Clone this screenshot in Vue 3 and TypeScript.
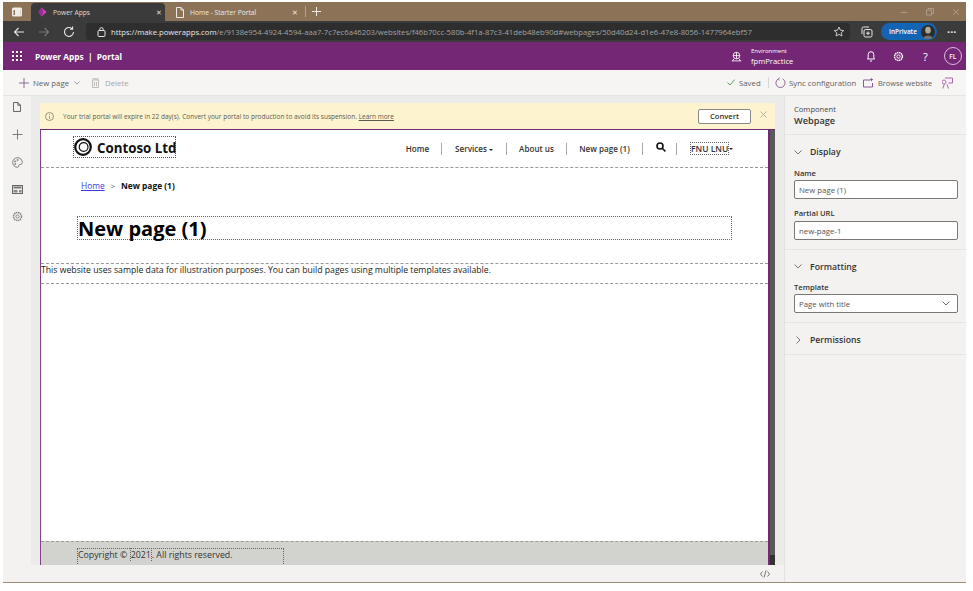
<script setup lang="ts">
const navItems = [
  { label: 'Home', caret: false, width: 47 },
  { label: 'Services', caret: true, width: 64 },
  { label: 'About us', caret: false, width: 59 },
  { label: 'New page (1)', caret: false, width: 75 },
]
</script>

<template>
  <div class="page">
    <div class="window">
      <!-- browser tabs -->
      <div class="titlebar">
        <svg class="tabs-btn" width="12" height="12" viewBox="0 0 12 12"><rect x="1" y="1.5" width="10" height="9" rx="1.5" fill="#f0ede8" /><rect x="2.5" y="4" width="7" height="5" fill="#8c7358" /><rect x="4" y="4" width="5.5" height="5" fill="#f0ede8" /></svg>
        <div class="tab active">
          <svg width="9" height="10" viewBox="0 0 9 10"><path d="M3.5 .5 L8.5 5 L3.5 9.5 L.5 5 Z" fill="#d04ac4" /><path d="M3.5 .5 L5.5 5 L3.5 9.5 L.5 5 Z" fill="#9a2a96" /></svg>
          <span class="tab-text">Power Apps</span>
          <span class="tab-x">✕</span>
        </div>
        <div class="tab second">
          <svg width="8" height="11" viewBox="0 0 8 11" fill="none" stroke="#efe9e2" stroke-width="1"><path d="M.5 .5 H5 L7.5 3 V10.5 H.5 Z M5 .5 V3 H7.5" /></svg>
          <span class="tab-text">Home - Starter Portal</span>
          <span class="tab-x">✕</span>
        </div>
        <span class="tab-sep"></span>
        <svg width="11" height="11" viewBox="0 0 11 11" stroke="#efe9e2" stroke-width="1"><path d="M5.5 1 V10 M1 5.5 H10" /></svg>
        <div class="win-controls">
          <svg width="8" height="10" viewBox="0 0 8 10" stroke="#ab9a85"><path d="M1 5.5 H7" /></svg>
          <svg width="8" height="10" viewBox="0 0 8 10" stroke="#ab9a85" fill="none"><rect x=".5" y="3" width="5" height="5" /><path d="M2 3 V1.5 H7.5 V6.5 H5.5" /></svg>
          <svg width="8" height="10" viewBox="0 0 8 10" stroke="#ab9a85"><path d="M1 2 L7 8 M7 2 L1 8" /></svg>
        </div>
      </div>

      <!-- address bar -->
      <div class="toolbar">
        <svg class="tb-back" width="12" height="12" viewBox="0 0 12 12" fill="none" stroke="#e6e6e6" stroke-width="1.1"><path d="M11 6 H1.5 M5.5 2 L1.5 6 L5.5 10" /></svg>
        <svg class="tb-fwd" width="12" height="12" viewBox="0 0 12 12" fill="none" stroke="#777" stroke-width="1.1"><path d="M1 6 H10.5 M6.5 2 L10.5 6 L6.5 10" /></svg>
        <svg class="tb-reload" width="12" height="12" viewBox="0 0 12 12" fill="none" stroke="#e6e6e6" stroke-width="1.1"><path d="M10.5 6 A4.5 4.5 0 1 1 9 2.6 M9.6 .6 V3.2 H7" /></svg>
        <div class="url">
          <svg width="9" height="10" viewBox="0 0 9 10" fill="none" stroke="#e6e6e6"><rect x="1" y="3.5" width="7" height="6" rx="1" /><path d="M2.8 3.5 V2.3 A1.7 1.7 0 0 1 6.2 2.3 V3.5" /></svg>
          <span class="url-text"><span class="url-main">https://make.powerapps.com</span>/e/9138e954-4924-4594-aaa7-7c7ec6a46203/websites/f46b70cc-580b-4f1a-87c3-41deb48eb90d#webpages/50d40d24-d1e6-47e8-8056-1477964ebf57</span>
          <svg class="url-star" width="12" height="12" viewBox="0 0 12 12" fill="none" stroke="#c8c8c8"><path d="M6 1 L7.4 4.2 L10.8 4.5 L8.2 6.8 L9 10 L6 8.4 L3 10 L3.8 6.8 L1.2 4.5 L4.6 4.2 Z" /></svg>
        </div>
        <svg class="tb-coll" width="12" height="12" viewBox="0 0 12 12" fill="none" stroke="#e6e6e6"><rect x="3" y="3.5" width="8" height="7.5" rx="1.5" /><path d="M1 8 V2.5 A1.5 1.5 0 0 1 2.5 1 H8 M7 5.5 V9 M5.2 7.2 H8.8" /></svg>
        <div class="inprivate">
          <span>InPrivate</span>
          <svg class="avatar" width="14" height="14" viewBox="0 0 14 14"><circle cx="7" cy="7" r="7" fill="#2c2c2c" /><ellipse cx="7" cy="5.2" rx="2.8" ry="3.4" fill="#b0a898" /><path d="M2.5 13 C3 9.5 11 9.5 11.5 13 A7 7 0 0 1 2.5 13 Z" fill="#77726a" /></svg>
        </div>
        <span class="tb-dots">···</span>
      </div>

      <!-- app header -->
      <header class="appbar">
        <svg class="waffle" width="10" height="10" viewBox="0 0 10 10" fill="#fff"><rect x="0" y="0" width="2" height="2" /><rect x="4" y="0" width="2" height="2" /><rect x="8" y="0" width="2" height="2" /><rect x="0" y="4" width="2" height="2" /><rect x="4" y="4" width="2" height="2" /><rect x="8" y="4" width="2" height="2" /><rect x="0" y="8" width="2" height="2" /><rect x="4" y="8" width="2" height="2" /><rect x="8" y="8" width="2" height="2" /></svg>
        <span class="app-title">Power Apps&nbsp; | &nbsp;Portal</span>
        <svg class="env-icon" width="11" height="11" viewBox="0 0 12 11" fill="none" stroke="#fff" stroke-width=".9"><circle cx="6" cy="4.5" r="3.6" /><path d="M6 1 V8 M2.5 4.5 H9.5 M.8 10.3 H11.2 M3 8 L2 10.3 M9 8 L10 10.3" /></svg>
        <div class="env">
          <span class="env-label">Environment</span>
          <span class="env-name">fpmPractice</span>
        </div>
        <svg class="ic-bell" width="8" height="11" viewBox="0 0 8 11" fill="none" stroke="#fff"><path d="M.5 8 H7.5 L6.8 6.5 V3.5 A2.8 2.8 0 0 0 1.2 3.5 V6.5 Z M3 10 H5" /></svg>
        <svg class="ic-gear" width="11" height="11" viewBox="0 0 12 12" fill="none" stroke="#fff"><circle cx="6" cy="6" r="1.8" /><circle cx="6" cy="6" r="4.3" stroke-width="1.6" stroke-dasharray="1.7 .55" /></svg>
        <span class="ic-help">?</span>
        <span class="user-circle">FL</span>
      </header>

      <!-- command bar -->
      <div class="cmdbar">
        <svg class="cmd-plus" width="10" height="10" viewBox="0 0 10 10" stroke="#8a6a96" stroke-width="1"><path d="M5 0 V10 M0 5 H10" /></svg>
        <span class="cmd-text new-page">New page</span>
        <svg class="cmd-chev" width="6" height="4" viewBox="0 0 6 4" fill="none" stroke="#a09e9c"><path d="M.3 .5 L3 3.2 L5.7 .5" /></svg>
        <svg class="cmd-trash" width="7" height="10" viewBox="0 0 7 10" fill="none" stroke="#bdbbb9"><path d="M.5 2 H6.5 V9.5 H.5 Z M0 1 H7 M2.5 .3 H4.5 M2.5 4 V8 M4.5 4 V8" /></svg>
        <span class="cmd-text muted">Delete</span>
        <svg class="cmd-check" width="8" height="7" viewBox="0 0 8 7" fill="none" stroke="#5a9e5a"><path d="M.4 3.5 L3 6 L7.6 .6" /></svg>
        <span class="cmd-text saved">Saved</span>
        <span class="cmd-sep"></span>
        <svg class="cmd-sync" width="11" height="12" viewBox="0 0 12 12" fill="none" stroke="#8b5a96" stroke-width="1"><path d="M3.5 1.6 A5 5 0 1 0 8.5 1.6 M5 .3 L3.4 1.6 L5 3" /></svg>
        <span class="cmd-text sync">Sync configuration</span>
        <svg class="cmd-browse" width="11" height="10" viewBox="0 0 11 10" fill="none" stroke="#8b5a96"><path d="M7 2 H.5 V9 H9.5 V5 M8.5 .2 V3 M7 1.6 H10" /></svg>
        <span class="cmd-text browse">Browse website</span>
        <svg class="cmd-person" width="11" height="12" viewBox="0 0 11 12" fill="none" stroke="#b061b0"><path d="M3 1 H10.5 V6 H6.5 M4 5 A2 2 0 1 0 4 5.1 M.7 11.5 L2.4 7.3 M6.5 11.5 L5 7.3" /></svg>
      </div>

      <div class="body">
        <!-- left rail -->
        <nav class="rail">
          <svg width="8" height="10" viewBox="0 0 9 11" fill="none" stroke="#3f3e3d" stroke-width=".9"><path d="M.5 .5 H5.5 L8.5 3.5 V10.5 H.5 Z M5.5 .5 V3.5 H8.5" /></svg>
          <svg width="11" height="11" viewBox="0 0 11 11" stroke="#6f6e6d" stroke-width=".9"><path d="M5.5 .5 V10.5 M.5 5.5 H10.5" /></svg>
          <svg width="11" height="11" viewBox="0 0 11 11" fill="none" stroke="#7d7c7b"><path d="M5.5 .7 A4.8 4.8 0 1 0 5.5 10.3 C7.2 10.3 6.4 8.6 7 7.9 C7.6 7.2 10.3 7.8 10.3 5.5 A4.8 4.8 0 0 0 5.5 .7 Z" /><circle cx="3.2" cy="4.4" r=".6" /><circle cx="5.6" cy="3" r=".6" /><circle cx="3.3" cy="7" r=".6" /></svg>
          <svg width="11" height="9" viewBox="0 0 11 9"><rect x=".5" y=".5" width="10" height="8" fill="none" stroke="#666" /><rect x="1.5" y="1.5" width="8" height="2" fill="#777" /><rect x="1.5" y="5" width="4" height="2.5" fill="#888" /><rect x="7" y="5" width="2.5" height="2.5" fill="#888" /></svg>
          <svg width="11" height="11" viewBox="0 0 11 11" fill="none" stroke="#8a8988"><circle cx="5.5" cy="5.5" r="1.6" /><circle cx="5.5" cy="5.5" r="4" stroke-width="1.5" stroke-dasharray="1.6 .5" /></svg>
        </nav>

        <main class="canvas">
          <div class="banner">
            <svg width="9" height="9" viewBox="0 0 9 9" fill="none" stroke="#77705a" stroke-width=".7"><circle cx="4.5" cy="4.5" r="4" /><path d="M4.5 4 V6.8 M4.5 2.2 V3.1" /></svg>
            <span class="banner-text">Your trial portal will expire in 22 day(s). Convert your portal to production to avoid its suspension. <u>Learn more</u></span>
            <button class="convert">Convert</button>
            <svg class="banner-x" width="7" height="7" viewBox="0 0 7 7" stroke="#a7a294" stroke-width=".8"><path d="M.5 .5 L6.5 6.5 M6.5 .5 L.5 6.5" /></svg>
          </div>

          <div class="preview">
            <div class="site">
              <div class="site-header">
                <div class="logo">
                  <svg class="logo-mark" width="18" height="18" viewBox="0 0 18 18" fill="none" stroke="#111"><circle cx="9" cy="9" r="7.8" stroke-width="2.2" /><circle cx="9.6" cy="9" r="4.4" stroke-width="1.2" /></svg>
                  <span class="logo-text">Contoso Ltd</span>
                </div>
                <div class="site-nav">
                  <template v-for="item in navItems" :key="item.label">
                    <span class="nav-item" :style="{ width: item.width + 'px' }">
                      {{ item.label }}<i v-if="item.caret" class="caret"></i>
                    </span>
                    <span class="nav-sep"></span>
                  </template>
                  <svg class="nav-search" width="10" height="10" viewBox="0 0 10 10" fill="none" stroke="#111" stroke-width="1.6"><circle cx="4" cy="4" r="3" /><path d="M6.2 6.2 L9.4 9.4" /></svg>
                  <span class="nav-sep"></span>
                  <span class="nav-user"><span class="dotted-name">FNU LNU</span><i class="caret"></i></span>
                </div>
              </div>

              <div class="crumbs">
                <a class="crumb-link">Home</a>
                <span class="crumb-gt">&gt;</span>
                <b>New page (1)</b>
              </div>

              <h1 class="page-title">New page (1)</h1>

              <p class="sample">This website uses sample data for illustration purposes. You can build pages using multiple templates available.</p>

              <footer class="site-footer">
                <div class="copyright">Copyright © <span class="year">2021</span>. All rights reserved.</div>
              </footer>
            </div>
            <div class="scroll"><div class="scroll-end"></div></div>
          </div>

          <div class="canvas-foot">
            <svg width="10" height="8" viewBox="0 0 10 8" fill="none" stroke="#666" stroke-width=".9"><path d="M2.5 1.5 L.5 4 L2.5 6.5 M7.5 1.5 L9.5 4 L7.5 6.5 M6 .5 L4 7.5" /></svg>
          </div>
        </main>

        <!-- property panel -->
        <aside class="panel">
          <div class="panel-head">
            <div class="comp-label">Component</div>
            <div class="comp-name">Webpage</div>
          </div>
          <section class="group group-display">
            <div class="group-title">
              <svg width="8" height="5" viewBox="0 0 8 5" fill="none" stroke="#777"><path d="M.5 .5 L4 4 L7.5 .5" /></svg>
              Display
            </div>
            <label class="field-label">Name</label>
            <div class="field">New page (1)</div>
            <label class="field-label second">Partial URL</label>
            <div class="field">new-page-1</div>
          </section>
          <section class="group group-format">
            <div class="group-title short">
              <svg width="8" height="5" viewBox="0 0 8 5" fill="none" stroke="#777"><path d="M.5 .5 L4 4 L7.5 .5" /></svg>
              Formatting
            </div>
            <label class="field-label">Template</label>
            <div class="field select">Page with title
              <svg width="8" height="5" viewBox="0 0 8 5" fill="none" stroke="#666"><path d="M.5 .5 L4 4 L7.5 .5" /></svg>
            </div>
          </section>
          <section class="group group-perm">
            <div class="group-title">
              <svg class="chev-right" width="5" height="8" viewBox="0 0 5 8" fill="none" stroke="#777"><path d="M.5 .5 L4 4 L.5 7.5" /></svg>
              Permissions
            </div>
          </section>
        </aside>
      </div>
    </div>
  </div>
</template>

<style>
html, body {
  margin: 0;
  background: #fff;
}
</style>

<style scoped>
.page {
  width: 973px;
  height: 591px;
  padding: 2px 7px 8px 3px;
  box-sizing: border-box;
  overflow: hidden;
  font-family: "Open Sans", "Noto Sans", sans-serif;
  color: #323130;
}

.window {
  height: 100%;
  display: flex;
  flex-direction: column;
  border-bottom: 1px solid #a08a72;
  box-sizing: border-box;
}

.titlebar {
  height: 19px;
  flex: none;
  display: flex;
  align-items: center;
  background: #8c7358;
}

.tabs-btn {
  margin: 0 8px;
}

.tab {
  width: 140px;
  height: 18px;
  margin-top: 1px;
  display: flex;
  align-items: center;
  gap: 6px;
  padding: 0 7px 0 11px;
  box-sizing: border-box;
  color: #efe9e2;
  font-size: 6.7px;
}

.tab.active {
  width: 134px;
  padding: 0 3px 0 7px;
  background: #3b3b3b;
  border-radius: 4px 4px 0 0;
  color: #ddd;
}

.tab-text {
  flex: 1;
}

.tab-x {
  font-size: 7px;
}

.tab-sep {
  width: 1px;
  height: 11px;
  margin-right: 5px;
  background: #b5a48f;
}

.win-controls {
  margin-left: auto;
  display: flex;
  gap: 18px;
  padding-right: 6px;
}

.toolbar {
  height: 21px;
  flex: none;
  display: flex;
  align-items: center;
  background: #3b3b3b;
}

.tb-back {
  margin-left: 10px;
}

.tb-fwd {
  margin-left: 13px;
}

.tb-reload {
  margin-left: 13px;
}

.url {
  width: 764px;
  height: 17px;
  margin-left: 11px;
  display: flex;
  align-items: center;
  gap: 5px;
  padding: 0 5px 0 11px;
  box-sizing: border-box;
  background: #2e2e2e;
  border-radius: 3px;
}

.url-text {
  flex: 1;
  font-size: 7.7px;
  color: #a3a3a3;
  white-space: nowrap;
  overflow: hidden;
}

.url-main {
  color: #e8e8e8;
}

.tb-coll {
  margin-left: 11px;
}

.inprivate {
  width: 56px;
  height: 17px;
  margin-left: 8px;
  display: flex;
  align-items: center;
  justify-content: space-between;
  padding: 0 2px 0 8px;
  box-sizing: border-box;
  border-radius: 9px;
  background: #1464b4;
  color: #fff;
  font-size: 6.4px;
  font-weight: 600;
}

.tb-dots {
  margin-left: 10px;
  color: #e6e6e6;
  font-size: 11px;
  font-weight: 700;
  line-height: 1;
}

.appbar {
  height: 28px;
  flex: none;
  display: flex;
  align-items: center;
  background: #742774;
  color: #fff;
}

.waffle {
  margin-left: 9px;
}

.app-title {
  width: 95px;
  margin-left: 13px;
  font-size: 8.3px;
  font-weight: 700;
}

.env-icon {
  margin-left: 601px;
}

.env {
  width: 116px;
  margin-left: 9px;
  display: flex;
  flex-direction: column;
  line-height: 10px;
}

.env-label {
  font-size: 6px;
}

.env-name {
  font-size: 7.6px;
}

.ic-gear {
  margin-left: 18px;
}

.ic-help {
  margin-left: 19px;
  font-size: 11px;
  line-height: 1;
}

.user-circle {
  width: 18px;
  height: 18px;
  margin-left: 16px;
  display: flex;
  align-items: center;
  justify-content: center;
  border: 1px solid #d8bcd8;
  box-sizing: border-box;
  border-radius: 50%;
  font-size: 6.5px;
  font-weight: 600;
}

.cmdbar {
  height: 26px;
  flex: none;
  display: flex;
  align-items: center;
  background: #f6f5f4;
  border-bottom: 1px solid #e5e4e3;
  box-sizing: border-box;
}

.cmd-text {
  font-size: 7.8px;
  color: #5f5e5d;
  white-space: nowrap;
}

.cmd-text.muted {
  color: #a8a6a4;
  margin-left: 6px;
  width: 24px;
}

.cmd-plus {
  margin-left: 16px;
}

.new-page {
  margin-left: 4px;
  width: 41px;
}

.cmd-trash {
  margin-left: 12px;
}

.cmd-check {
  margin-left: 598px;
}

.saved {
  margin-left: 4px;
  width: 23px;
}

.cmd-sep {
  width: 1px;
  height: 11px;
  margin: 0 6px;
  background: #d8d6d4;
}

.sync {
  margin-left: 3px;
  width: 71px;
}

.cmd-browse {
  margin-left: 3px;
}

.browse {
  margin-left: 4px;
  width: 55px;
  font-size: 7.4px;
}

.cmd-person {
  margin-left: 9px;
}

.body {
  flex: 1;
  min-height: 0;
  display: flex;
}

.rail {
  width: 28px;
  flex: none;
  display: flex;
  flex-direction: column;
  align-items: center;
  padding-top: 6px;
  gap: 17px;
  box-sizing: border-box;
  background: #f3f2f1;
}

.canvas {
  flex: 1;
  min-width: 0;
  display: flex;
  flex-direction: column;
  padding-left: 9px;
  background: #ebebea;
  border-right: 1px solid #e3e2e1;
}

.banner {
  height: 26px;
  flex: none;
  margin-top: 7px;
  margin-right: 9px;
  display: flex;
  align-items: center;
  padding-left: 5px;
  background: #fdf3cf;
  box-sizing: border-box;
}

.banner-text {
  flex: 1;
  margin-left: 9px;
  font-size: 6.5px;
  color: #5d5a4e;
}

.convert {
  width: 53px;
  height: 15px;
  padding: 0;
  background: #fff;
  border: 1px solid #8a8886;
  border-radius: 2px;
  font-family: inherit;
  font-size: 7.6px;
  font-weight: 600;
  color: #323130;
}

.banner-x {
  margin: 0 8px 4px 9px;
}

.preview {
  flex: 1;
  min-height: 0;
  display: flex;
  margin-right: 9px;
  border-top: 1px solid #742774;
}

.site {
  flex: 1;
  min-width: 0;
  display: flex;
  flex-direction: column;
  background: #fff;
  border-left: 1px solid #84418a;
  border-right: 2px solid #742774;
}

.site-header {
  height: 38px;
  flex: none;
  display: flex;
  align-items: center;
  justify-content: space-between;
  padding: 0 35px 4px 32px;
  box-sizing: border-box;
  border-bottom: 1px dashed #999;
}

.logo {
  width: 103px;
  height: 22px;
  display: flex;
  align-items: center;
  gap: 5px;
  box-sizing: border-box;
  border: 1px dotted #555;
}

.logo-mark {
  flex: none;
}

.logo-text {
  margin-top: 2px;
  font-size: 13.3px;
  font-weight: 700;
  color: #111;
  white-space: nowrap;
}

.site-nav {
  display: flex;
  align-items: center;
  margin-top: 4px;
  font-size: 8.1px;
  font-weight: 600;
  color: #333;
}

.nav-item {
  text-align: center;
  white-space: nowrap;
}

.nav-sep {
  width: 1px;
  height: 12px;
  background: #a8a8a8;
}

.nav-search {
  margin: 0 10px 4px 13px;
}

.nav-user {
  margin-left: 13px;
  display: flex;
  align-items: center;
}

.dotted-name {
  width: 39px;
  box-sizing: border-box;
  text-align: center;
  white-space: nowrap;
  font-size: 8.5px;
  border: 1px dotted #666;
}

.caret {
  display: inline-block;
  margin-left: 2px;
  vertical-align: middle;
  border-top: 2.5px solid #222;
  border-left: 2.5px solid transparent;
  border-right: 2.5px solid transparent;
}

.nav-user .caret {
  margin-left: 0;
}

.crumbs {
  margin: 12px 0 0 40px;
  height: 12px;
  line-height: 12px;
  font-size: 8.4px;
  color: #111;
  display: flex;
  align-items: center;
}

.crumb-link {
  color: #3a3ae0;
  text-decoration: underline;
}

.crumb-gt {
  margin: 0 6px;
  color: #555;
  font-size: 7.5px;
}

.page-title {
  height: 24px;
  margin: 24px 36px 0 36px;
  box-sizing: border-box;
  border: 1px dotted #666;
  font-size: 20px;
  font-weight: 700;
  line-height: 24px;
  color: #000;
}

.sample {
  height: 21px;
  margin: 23px 0 0;
  box-sizing: border-box;
  border-top: 1px dashed #999;
  border-bottom: 1px dashed #999;
  font-size: 8.7px;
  line-height: 13px;
  color: #222;
  white-space: nowrap;
}

.site-footer {
  margin-top: auto;
  height: 24px;
  flex: none;
  box-sizing: border-box;
  padding: 6px 0 0 36px;
  background: #d2d3ce;
  border-top: 1px dashed #999;
  overflow: hidden;
}

.copyright {
  width: 207px;
  height: 20px;
  box-sizing: border-box;
  border: 1px dotted #666;
  font-size: 8.8px;
  line-height: 13px;
  color: #333;
}

.year {
  border: 1px dotted #666;
  border-bottom: none;
}

.scroll {
  width: 5px;
  flex: none;
  display: flex;
  align-items: flex-end;
  background: #5a5a5a;
}

.scroll-end {
  width: 100%;
  height: 10px;
  background: #333;
}

.canvas-foot {
  height: 17px;
  flex: none;
  margin-left: -9px;
  display: flex;
  align-items: center;
  justify-content: flex-end;
  padding-right: 14px;
  background: #f3f2f1;
}

.panel {
  width: 181px;
  flex: none;
  background: #f3f2f1;
  box-sizing: border-box;
}

.panel-head {
  height: 39px;
  padding: 8px 0 0 9px;
  box-sizing: border-box;
  border-bottom: 1px solid #e6e5e4;
}

.comp-label {
  font-size: 7.6px;
  line-height: 11px;
  color: #444;
}

.comp-name {
  font-size: 9.2px;
  font-weight: 600;
  line-height: 12px;
  color: #333;
}

.group {
  padding: 0 8px 0 9px;
  box-sizing: border-box;
  border-bottom: 1px solid #e6e5e4;
}

.group-display {
  height: 115px;
}

.group-format {
  height: 73px;
}

.group-perm {
  height: 32px;
}

.group-title {
  height: 32px;
  padding-top: 2px;
  box-sizing: border-box;
  display: flex;
  align-items: center;
  gap: 8px;
  font-size: 8.7px;
  font-weight: 600;
  color: #333;
}

.group-title.short {
  height: 31px;
}

.chev-right {
  margin: 0 1px 0 2px;
}

.field-label {
  display: block;
  height: 12px;
  font-size: 7.6px;
  font-weight: 600;
  line-height: 12px;
  color: #333;
}

.field-label.second {
  margin-top: 8px;
}

.field {
  height: 19px;
  margin-top: 1px;
  padding: 0 4px;
  display: flex;
  align-items: center;
  justify-content: space-between;
  box-sizing: border-box;
  background: #fff;
  border: 1px solid #7a7876;
  border-radius: 2px;
  font-size: 7.8px;
  color: #555;
}

.field-label.second + .field {
  margin-top: 2px;
}

.field.select svg {
  margin-right: 3px;
}
</style>
